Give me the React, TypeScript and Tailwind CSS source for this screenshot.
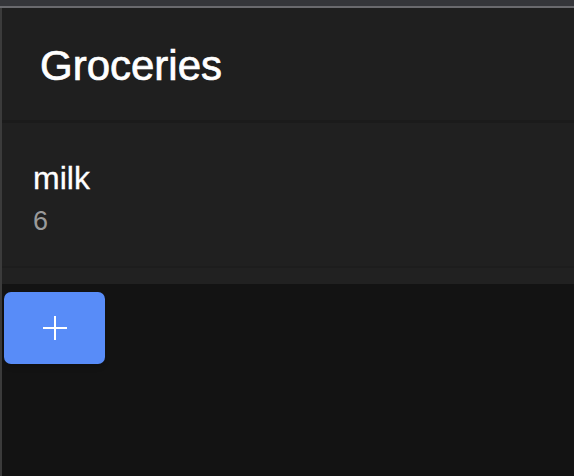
const items = [{ name: "milk", qty: 6 }];

export default function App() {
  return (
    <div className="flex h-[476px] w-[574px] flex-col bg-[#131313] font-['Liberation_Sans',Arial,sans-serif]">
      <div className="h-[6px] bg-[#35363a]" />
      <div className="h-[2px] bg-[#6a6a6e]" />
      <div className="flex flex-1 border-l-2 border-[#3b3b3b]">
        <div className="flex flex-1 flex-col">
          <header className="flex h-[112px] items-center bg-[#1f1f1f] pl-[38px]">
            <h1 className="mt-[2px] text-[42px] text-white [-webkit-text-stroke:0.7px_white]">Groceries</h1>
          </header>
          <div className="h-[3px] bg-[#1b1b1b]" />
          <ul className="bg-[#202020]">
            {items.map((item) => (
              <li key={item.name} className="flex h-[143px] flex-col justify-center pl-[31px] pt-[6px]">
                <span className="text-[32px] leading-[36px] text-white [-webkit-text-stroke:0.3px_white]">{item.name}</span>
                <span className="mt-[10px] text-[27px] leading-[30px] text-[#9a9a9a]">{item.qty}</span>
              </li>
            ))}
          </ul>
          <div className="h-[18px] border-t-2 border-[#1d1d1d] bg-[#212121]" />
          <div className="pl-[2px] pt-[8px]">
            <button className="flex h-[72px] w-[101px] items-center justify-center rounded-[7px] bg-[#588cf8] text-white shadow-md">
              <svg width="26" height="26" viewBox="0 0 26 26" fill="none" stroke="currentColor" strokeWidth="2">
                <path d="M13 1v24M1 13h24" />
              </svg>
            </button>
          </div>
        </div>
      </div>
    </div>
  );
}
